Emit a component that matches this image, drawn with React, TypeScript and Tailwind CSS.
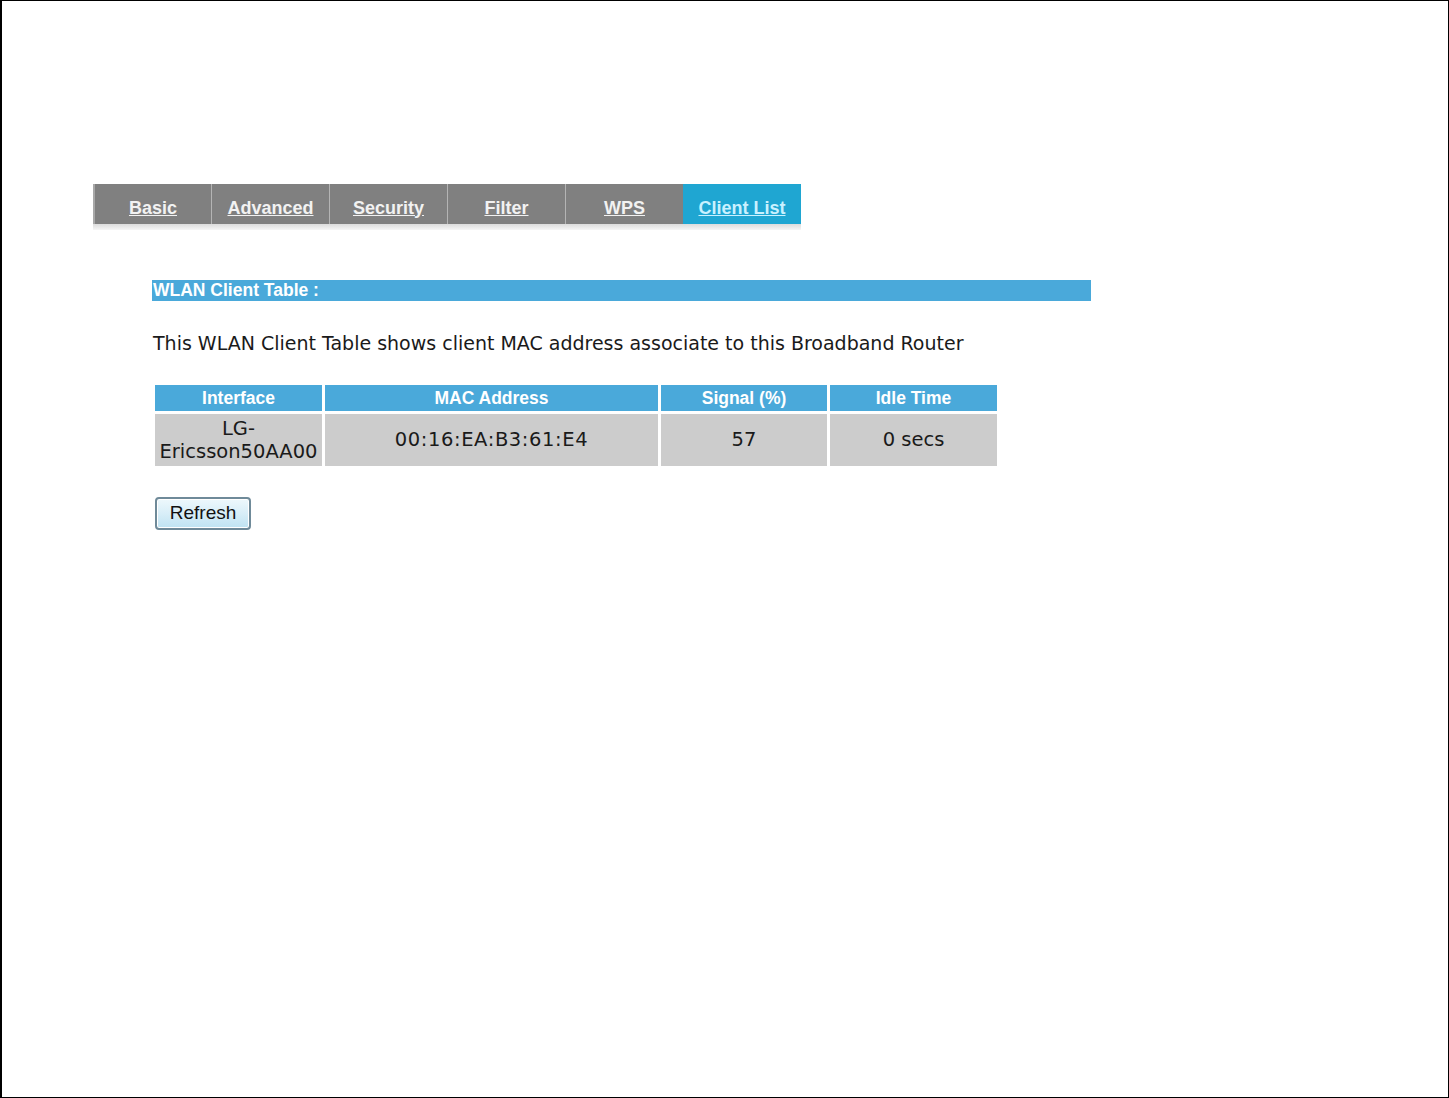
import React from 'react';

const tabs = ['Basic', 'Advanced', 'Security', 'Filter', 'WPS', 'Client List'];

export default function App() {
  return (
    <div className="w-[1449px] h-[1098px] bg-white border-t border-r border-b border-l-2 border-black">
      {/* tabs */}
      <div className="pt-[183px] pl-[91px]">
        <div className="flex w-[708px]">
          {tabs.map((t, i) => {
            const active = t === 'Client List';
            return (
              <div key={t} className="flex-1 h-[46px] flex flex-col">
                <div
                  className={`h-[40px] flex items-center justify-center pt-[8px] ${
                    active ? 'bg-[#1fa6d2]' : 'bg-[#808080]'
                  } ${i > 0 && !active ? 'border-l border-[#b4b4b4]' : ''} ${i === 0 ? 'border-l-2 border-[#a8a8a8]' : ''}`}
                >
                  <a
                    className={`underline font-bold text-[18px] ${
                      active ? 'text-[#c9f1ff]' : 'text-[#f2f2f2]'
                    }`}
                    style={{ fontFamily: '"Liberation Sans", Arial, sans-serif' }}
                  >
                    {t}
                  </a>
                </div>
                <div className="h-[6px] bg-gradient-to-b from-[#dcdcdc] to-[#f6f6f6]" />
              </div>
            );
          })}
        </div>
      </div>

      {/* content */}
      <div className="pl-[150px] pt-[50px]" style={{ fontFamily: '"DejaVu Sans", Verdana, sans-serif' }}>
        <div className="w-[939px] h-[21px] bg-[#4aa9da] flex items-center">
          <span
            className="text-white font-bold text-[17.5px] pl-[1px]"
            style={{ fontFamily: '"Liberation Sans", Arial, sans-serif' }}
          >
            WLAN Client Table :
          </span>
        </div>

        <p className="mt-[28px] text-[19px] text-[#1a1a1a] pl-[1px]">
          This WLAN Client Table shows client MAC address associate to this Broadband Router
        </p>

        <table className="mt-[24px] border-separate border-spacing-[3px] text-[19.5px] text-[#1a1a1a]">
          <thead>
            <tr
              className="bg-[#4aa9da] text-white font-bold h-[25px]"
              style={{ fontFamily: '"Liberation Sans", Arial, sans-serif' }}
            >
              <th className="w-[167px] p-0 font-bold text-[17.5px]">Interface</th>
              <th className="w-[333px] p-0 font-bold text-[17.5px]">MAC Address</th>
              <th className="w-[166px] p-0 font-bold text-[17.5px]">Signal (%)</th>
              <th className="w-[167px] p-0 font-bold text-[17.5px]">Idle Time</th>
            </tr>
          </thead>
          <tbody>
            <tr className="bg-[#cccccc] h-[52px] text-center">
              <td className="p-0 leading-[23px]">
                LG-
                <br />
                Ericsson50AA00
              </td>
              <td className="p-0 tracking-[0.6px]">00:16:EA:B3:61:E4</td>
              <td className="p-0">57</td>
              <td className="p-0">0 secs</td>
            </tr>
          </tbody>
        </table>

        <div className="mt-[28px] pl-[3px]">
          <button
            className="w-[96px] h-[33px] rounded-[4px] border-2 border-[#6f8a99] bg-gradient-to-b from-[#eef8fc] via-[#d8eef8] to-[#bfe3f2] text-[19px] text-[#111] shadow-[inset_0_0_0_1px_#ffffff]"
            style={{ fontFamily: '"Liberation Sans", Arial, sans-serif' }}
          >
            Refresh
          </button>
        </div>
      </div>
    </div>
  );
}
